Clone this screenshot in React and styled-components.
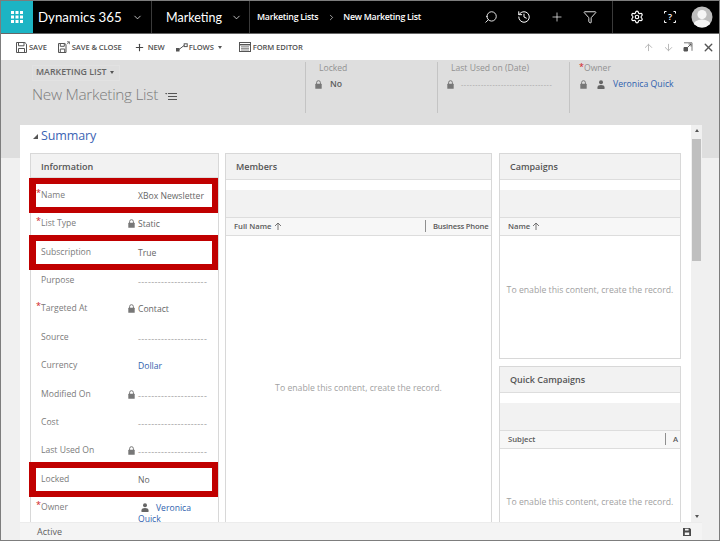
import React from "react";
import styled, { createGlobalStyle } from "styled-components";
import {
  ArrowDown,
  ArrowUp,
  Funnel,
  History,
  Plus,
  Search,
  Settings,
  X,
  ChevronDown,
  ChevronRight,
} from "lucide-react";

const FONT = `"Open Sans", "Noto Sans", "Liberation Sans", sans-serif`;

const GlobalStyle = createGlobalStyle`
  html, body {
    margin: 0;
    padding: 0;
    background: #fff;
  }
  body {
    font-family: ${FONT};
  }
  * {
    box-sizing: border-box;
  }
`;

/**
 * shell
 */
const Frame = styled.div`
  width: 720px;
  height: 541px;
  border: 1px solid #7d7d7d;
  display: flex;
  flex-direction: column;
  overflow: hidden;
  background: #f0f0f0;
`;

const Nav = styled.header`
  height: 33px;
  flex: none;
  display: flex;
  align-items: stretch;
  background: #000;
  color: #fff;
  border-bottom: 1px solid #666;
`;

const AppTile = styled.div`
  width: 32px;
  flex: none;
  display: flex;
  align-items: center;
  justify-content: center;
  background: #1cb4c4;
`;

const NavSegment = styled.div`
  width: ${({ $w }) => $w}px;
  flex: none;
  display: flex;
  align-items: center;
  padding-left: ${({ $pad }) => $pad}px;
  border-right: 1px solid #3a3a3a;
  font-family: Lato, ${FONT};
  font-size: ${({ $size }) => $size}px;
  white-space: nowrap;

  svg {
    margin-left: ${({ $gap }) => $gap}px;
  }
`;

const Crumbs = styled.div`
  flex: none;
  width: 223px;
  padding-left: 7px;
  display: flex;
  align-items: center;
  font-size: 8.8px;
  font-weight: 600;
  letter-spacing: -0.25px;
  white-space: nowrap;

  svg {
    margin: 0 7px 0 9px;
  }
`;

const NavIcons = styled.div`
  width: 140px;
  flex: none;
  display: flex;
  align-items: center;
  padding-left: 11px;
  gap: 19px;
  border-right: 1px solid #3a3a3a;
`;

const NavTools = styled.div`
  flex: 1;
  display: flex;
  align-items: center;
  padding-left: 17px;
`;

const HelpMark = styled.span`
  width: 12px;
  height: 12px;
  margin-left: 20px;
  position: relative;
  font-size: 9px;
  font-weight: 600;
  text-align: center;
  line-height: 12px;

  svg {
    position: absolute;
    inset: 0;
  }
`;

const Avatar = styled.svg`
  width: 22px;
  height: 22px;
  margin-left: 15px;
  flex: none;
`;

/**
 * toolbar
 */
const Toolbar = styled.div`
  height: 26px;
  flex: none;
  display: flex;
  align-items: center;
  padding-left: 15px;
  background: #fff;
`;

const ToolButton = styled.div`
  display: flex;
  align-items: center;
  margin-right: ${({ $mr = 0 }) => $mr}px;
  font-size: 7.6px;
  font-weight: 600;
  color: #505050;
  white-space: nowrap;
  letter-spacing: -0.1px;

  svg {
    flex: none;
    margin-right: ${({ $gap = 2 }) => $gap}px;
  }
`;

const Caret = styled.span`
  width: 0;
  height: 0;
  margin-left: ${({ $ml = 4 }) => $ml}px;
  border-left: 2.5px solid transparent;
  border-right: 2.5px solid transparent;
  border-top: 3px solid ${({ $color = "#555" }) => $color};
`;

const ToolbarRight = styled.div`
  margin-left: auto;
  display: flex;
  align-items: center;
  gap: 9px;
  padding-right: 4px;
  color: #b4b4b4;
`;

/**
 * record header
 */
const Main = styled.main`
  flex: 1;
  min-height: 0;
  display: flex;
  flex-direction: column;
  background: linear-gradient(#dedede 98px, #f0f0f0 98px);
`;

const RecordHeader = styled.section`
  height: 65px;
  flex: none;
  display: flex;
  padding-top: 2px;
`;

const RecordTitle = styled.div`
  width: 304px;
  flex: none;
  padding: 3px 0 0 31px;
`;

const EntityMenu = styled.div`
  width: 88px;
  height: 16px;
  display: flex;
  align-items: center;
  padding: 0 0 2px 3px;
  border: 1px solid #e2e2e2;
  font-size: 8.8px;
  font-weight: 600;
  color: #666;
  white-space: nowrap;
`;

const RecordName = styled.div`
  display: flex;
  align-items: center;
  margin-top: 2px;
  font-size: 15.4px;
  font-weight: 300;
  letter-spacing: -0.3px;
  line-height: 24px;
  color: #7c7c7c;
  white-space: nowrap;

  svg {
    margin: 2px 0 0 7px;
  }
`;

const HeaderField = styled.div`
  width: ${({ $w }) => $w}px;
  height: 51px;
  flex: none;
  border-left: 1px solid #c4c4c4;
  padding: 1px 0 0 ${({ $pad }) => $pad}px;
`;

const HeaderLabel = styled.div`
  position: relative;
  height: 11px;
  margin-left: ${({ $ml = 4 }) => $ml}px;
  font-size: 8.6px;
  line-height: 11px;
  color: #929292;
`;

const HeaderValue = styled.div`
  display: flex;
  align-items: center;
  height: 16px;
  margin-top: 2px;
  font-size: 8.7px;
  color: ${({ $link }) => ($link ? "#2f5fae" : "#5d5d5d")};
  font-weight: ${({ $bold }) => ($bold ? 600 : 400)};
  white-space: nowrap;
`;

const Star = styled.span`
  color: #d02020;
  font-size: 9px;
  line-height: 9px;
`;

const HeaderStar = styled(Star)`
  position: absolute;
  left: -5px;
  top: -1px;
`;

const Dashes = styled.span`
  color: #a0a0a0;
  font-size: ${({ $size = 9 }) => $size}px;
  letter-spacing: ${({ $spacing = 0.4 }) => $spacing}px;
  margin-left: ${({ $ml = 0 }) => $ml}px;
  white-space: nowrap;
`;

const HeaderGap = styled.span`
  margin-left: ${({ $ml }) => $ml}px;
  display: flex;
  align-items: center;
`;

/**
 * form area
 */
const Workspace = styled.div`
  flex: 1;
  min-height: 0;
  display: flex;
  margin: 0 17px 0 19px;
`;

const Card = styled.div`
  flex: 1;
  min-width: 0;
  overflow: hidden;
  background: #fff;
`;

const SectionTitle = styled.div`
  height: 28px;
  display: flex;
  align-items: center;
  padding: 0 0 7px 13px;
  font-size: 12.5px;
  color: #3b64b4;
  letter-spacing: -0.1px;
`;

const Twist = styled.span`
  width: 0;
  height: 0;
  margin: 2px 3px 0 0;
  border-left: 5px solid transparent;
  border-bottom: 5px solid #555;
`;

const Columns = styled.div`
  height: 420px;
  display: flex;
  padding-left: 10px;
`;

const Panel = styled.div`
  flex: ${({ $fill }) => ($fill ? 1 : "none")};
  width: ${({ $w }) => ($w ? `${$w}px` : "auto")};
  height: ${({ $h }) => ($h ? `${$h}px` : "auto")};
  margin-left: ${({ $ml = 0 }) => $ml}px;
  overflow: ${({ $open }) => ($open ? "visible" : "hidden")};
  border: 1px solid #d8d8d8;
  background: #fff;
`;

const SideColumn = styled.div`
  width: 182px;
  margin-left: 7px;
  flex: none;
  display: flex;
  flex-direction: column;
  gap: 7px;
`;

const PanelTitle = styled.div`
  height: ${({ $h = 26 }) => $h}px;
  display: flex;
  align-items: center;
  padding: ${({ $pt = 0 }) => $pt}px 0 0 10px;
  background: #f2f2f2;
  border-bottom: 1px solid #dddddd;
  font-size: 9px;
  font-weight: 600;
  color: #555;
`;

const GridBar = styled.div`
  height: 27px;
  margin-top: 10px;
  background: #f2f2f2;
`;

const GridHead = styled.div`
  height: 19px;
  display: flex;
  align-items: center;
  padding: 0 0 2px 8px;
  background: #f7f7f7;
  border-top: 1px solid #dddddd;
  border-bottom: 1px solid #dddddd;
  font-size: 7.7px;
  font-weight: 600;
  color: #5a5a5a;
  white-space: nowrap;
  overflow: hidden;

  svg {
    margin-left: 2px;
  }
`;

const GridColumn = styled.div`
  flex: none;
  width: ${({ $w }) => ($w ? `${$w}px` : "auto")};
  display: flex;
  align-items: center;
  letter-spacing: ${({ $tight }) => ($tight ? "-0.2px" : "0")};
`;

const ColumnRule = styled.span`
  width: 1px;
  height: 12px;
  flex: none;
  margin-right: 7px;
  background: #8f8f8f;
`;

const EmptyNote = styled.div`
  padding-top: ${({ $top }) => $top}px;
  text-align: center;
  font-size: 8.7px;
  line-height: 12px;
  color: #a2a2a2;
  white-space: nowrap;
`;

const Rows = styled.div`
  padding-top: 3px;
`;

const Row = styled.div`
  position: relative;
  height: 28.36px;
  display: grid;
  grid-template-columns: 5px 87px 10px 1fr;
  padding-left: 5px;
  align-items: start;

  ${({ $marked }) =>
    $marked &&
    `
    &::after {
      content: "";
      position: absolute;
      inset: -3px 0 -4px -2px;
      border: solid #c00000;
      border-width: 6px 6px 6px 7px;
      pointer-events: none;
    }
  `}
`;

const RowStar = styled(Star)`
  padding-top: 7px;
`;

const RowLabel = styled.div`
  font-size: 8.6px;
  line-height: 28px;
  color: #7b7b7b;
  white-space: nowrap;
`;

const RowLock = styled.div`
  padding-top: 10px;
`;

const RowValue = styled.div`
  padding: 10px 10px 0 0;
  font-size: 8.6px;
  line-height: 11.5px;
  color: ${({ $link }) => ($link ? "#2f5fae" : "#666")};

  svg {
    vertical-align: -1px;
    margin: 0 7px 0 3px;
  }
`;

const Scrollbar = styled.div`
  width: 11px;
  flex: none;
  display: flex;
  flex-direction: column;
  align-items: center;
  padding-top: 4px;
  background: #f0f0f0;
`;

const ScrollThumb = styled.div`
  width: 9px;
  height: 122px;
  margin-top: 7px;
  background: #bfbfbf;
`;

const ScrollUp = styled.span`
  width: 0;
  height: 0;
  border-left: 2.5px solid transparent;
  border-right: 2.5px solid transparent;
  border-bottom: 3px solid #555;
`;

const ScrollDown = styled(Caret)`
  margin: auto 0 4px;
`;

const Footer = styled.footer`
  height: 18px;
  flex: none;
  margin: 0 17px 0 19px;
  display: flex;
  align-items: center;
  justify-content: space-between;
  padding: 0 11px 0 17px;
  background: #f4f4f4;
  border-top: 1px solid #ececec;
  font-size: 9px;
  color: #5f5f5f;
`;

/**
 * drawn icons
 */
const Waffle = () => (
  <svg width="12" height="12" viewBox="0 0 12 12" fill="#fff">
    {[0, 4.5, 9].flatMap((y) =>
      [0, 4.5, 9].map((x) => (
        <rect key={`${x}-${y}`} x={x} y={y} width="3" height="3" />
      ))
    )}
  </svg>
);

const Lock = ({ color = "#777" }) => (
  <svg width="7" height="9" viewBox="0 0 7 9" style={{ display: "block" }}>
    <path
      d="M1.6 4V2.6a1.9 1.9 0 0 1 3.8 0V4"
      fill="none"
      stroke={color}
      strokeWidth="1"
    />
    <rect x="0.3" y="3.8" width="6.4" height="5" rx="0.4" fill={color} />
  </svg>
);

const Person = ({ color = "#666" }) => (
  <svg width="8" height="9" viewBox="0 0 8 9" fill={color}>
    <circle cx="4" cy="2.2" r="2" />
    <path d="M0.5 9V7.2C0.5 5.8 1.8 5 4 5s3.5.8 3.5 2.2V9z" />
  </svg>
);

const SaveIcon = ({ size = 11, color = "#555" }) => (
  <svg width={size} height={size} viewBox="0 0 11 11" fill="none">
    <path d="M.5.5h8.4l1.6 1.6v8.4H.5z" stroke={color} />
    <path d="M2.5 1v2.8h5.5V1M2.5 10V6.5h6V10" stroke={color} />
  </svg>
);

const FooterSave = () => (
  <svg width="8" height="8" viewBox="0 0 8 8" fill="#4a4a4a">
    <path d="M0 0h6.8L8 1.2V8H0zM2 .8v1.8h3.6V.8zM1.8 4.6V7h4.4V4.6z" fillRule="evenodd" />
  </svg>
);

const SaveCloseIcon = () => (
  <svg width="12" height="12" viewBox="0 0 12 12" fill="none" stroke="#555">
    <path d="M.5 2.5h6.4l1.1 1.1v7.9H.5z" />
    <path d="M2.3 3v2.3h4V3M2.3 11V8h4.4v3" />
    <path d="M9 .8h2.4v2.4M11.4.8 9 3.2" strokeWidth=".8" />
  </svg>
);

const FlowsIcon = () => (
  <svg width="12" height="9" viewBox="0 0 12 9" fill="none" stroke="#555">
    <rect x=".5" y="5.5" width="2.5" height="2.5" fill="#555" />
    <path d="M3 6.5 8 2.5" />
    <rect x="8.2" y=".8" width="3" height="2.8" />
  </svg>
);

const FormIcon = () => (
  <svg width="12" height="10" viewBox="0 0 12 10" fill="none" stroke="#555">
    <rect x=".5" y=".5" width="11" height="9" />
    <path d="M.5 2.7h11" strokeWidth="1.4" />
    <path d="M2 4.8h8M2 6.4h8M2 8h8" strokeWidth=".7" />
  </svg>
);

const PopoutIcon = () => (
  <svg width="10" height="10" viewBox="0 0 10 10" fill="none" stroke="#555">
    <path d="M1 .8h8v8" strokeWidth=".8" />
    <path d="M1 5.5h3.5V9H1z" fill="#555" />
    <path d="M4.5 5.5 8 2M5.5 2H8v2.5" strokeWidth=".9" />
  </svg>
);

const ListGlyph = () => (
  <svg width="12" height="7" viewBox="0 0 12 7" fill="#555">
    <path d="M0 0h2.4L1.2 1.4zM3 0h9v1H3zM3 3h9v1H3zM3 6h9v1H3z" />
  </svg>
);

const ArrowUpMini = () => (
  <svg width="8" height="8" viewBox="0 0 8 8" fill="none" stroke="#666">
    <path d="M4 8V1M1 4l3-3 3 3" strokeWidth=".9" />
  </svg>
);

const HelpCorners = () => (
  <svg width="12" height="12" viewBox="0 0 12 12" fill="none" stroke="#fff">
    <path d="M2.5.5h-2v2M9.5.5h2v2M.5 9.5v2h2M11.5 9.5v2h-2" />
  </svg>
);

const ANON = (
  <Avatar viewBox="0 0 22 22">
    <defs>
      <clipPath id="face">
        <circle cx="11" cy="11" r="10.5" />
      </clipPath>
    </defs>
    <circle cx="11" cy="11" r="10.5" fill="#bdbdbd" />
    <g clipPath="url(#face)" fill="#f5f5f5">
      <circle cx="11" cy="8.6" r="4.6" />
      <ellipse cx="11" cy="19.5" rx="9" ry="6" />
    </g>
  </Avatar>
);

const DASHES = "---------------------";

const fields = [
  { label: "Name", required: true, value: "XBox Newsletter", marked: true },
  { label: "List Type", required: true, value: "Static", locked: true },
  { label: "Subscription", value: "True", marked: true },
  { label: "Purpose", value: DASHES },
  { label: "Targeted At", required: true, value: "Contact", locked: true },
  { label: "Source", value: DASHES },
  { label: "Currency", value: "Dollar", link: true },
  { label: "Modified On", value: DASHES, locked: true },
  { label: "Cost", value: DASHES },
  { label: "Last Used On", value: DASHES, locked: true },
  { label: "Locked", value: "No", marked: true },
  { label: "Owner", required: true, value: "Veronica Quick", link: true, person: true },
];

const GridPanelBody = ({ columns, noteTop }) => (
  <>
    <GridBar />
    <GridHead>{columns}</GridHead>
    <EmptyNote $top={noteTop}>To enable this content, create the record.</EmptyNote>
  </>
);

const App = () => (
  <>
    <GlobalStyle />
    <Frame>
      <Nav>
        <AppTile>
          <Waffle />
        </AppTile>
        <NavSegment $w={119} $pad={5} $gap={10} $size={13.3}>
          Dynamics 365
          <ChevronDown size={11} strokeWidth={1.6} />
        </NavSegment>
        <NavSegment $w={98} $pad={14} $gap={9} $size={12.5}>
          Marketing
          <ChevronDown size={11} strokeWidth={1.6} />
        </NavSegment>
        <Crumbs>
          Marketing Lists
          <ChevronRight size={9} strokeWidth={1.6} />
          New Marketing List
        </Crumbs>
        <NavIcons>
          <Search size={14} strokeWidth={1.5} style={{ transform: "scaleX(-1)" }} />
          <History size={14} strokeWidth={1.7} />
          <Plus size={14} strokeWidth={1.2} />
          <Funnel size={14} strokeWidth={1.5} />
        </NavIcons>
        <NavTools>
          <Settings size={14} strokeWidth={2} />
          <HelpMark>
            <HelpCorners />?
          </HelpMark>
          {ANON}
        </NavTools>
      </Nav>

      <Toolbar>
        <ToolButton $mr={11}>
          <SaveIcon />
          SAVE
        </ToolButton>
        <ToolButton $mr={12}>
          <SaveCloseIcon />
          SAVE &amp; CLOSE
        </ToolButton>
        <ToolButton $mr={11} $gap={3}>
          <Plus size={11} strokeWidth={2.4} color="#444" />
          NEW
        </ToolButton>
        <ToolButton $mr={17} $gap={1}>
          <FlowsIcon />
          FLOWS
          <Caret />
        </ToolButton>
        <ToolButton>
          <FormIcon />
          FORM EDITOR
        </ToolButton>
        <ToolbarRight>
          <ArrowUp size={11} strokeWidth={2} />
          <ArrowDown size={11} strokeWidth={2} />
          <PopoutIcon />
          <X size={13} strokeWidth={2.6} color="#555" />
        </ToolbarRight>
      </Toolbar>

      <Main>
        <RecordHeader>
          <RecordTitle>
            <EntityMenu>
              MARKETING LIST
              <Caret $ml={3} />
            </EntityMenu>
            <RecordName>
              New Marketing List
              <ListGlyph />
            </RecordName>
          </RecordTitle>
          <HeaderField $w={132} $pad={9}>
            <HeaderLabel>Locked</HeaderLabel>
            <HeaderValue $bold>
              <Lock />
              <HeaderGap $ml={8}>No</HeaderGap>
            </HeaderValue>
          </HeaderField>
          <HeaderField $w={132} $pad={9}>
            <HeaderLabel>Last Used on (Date)</HeaderLabel>
            <HeaderValue>
              <Lock />
              <Dashes $size={7} $spacing={0.6} $ml={7}>
                {"-".repeat(32)}
              </Dashes>
            </HeaderValue>
          </HeaderField>
          <HeaderField $w={133} $pad={10}>
            <HeaderLabel>
              <HeaderStar>*</HeaderStar>
              Owner
            </HeaderLabel>
            <HeaderValue $link>
              <Lock />
              <HeaderGap $ml={10}>
                <Person />
              </HeaderGap>
              <HeaderGap $ml={8}>Veronica Quick</HeaderGap>
            </HeaderValue>
          </HeaderField>
        </RecordHeader>

        <Workspace>
          <Card>
            <SectionTitle>
              <Twist />
              Summary
            </SectionTitle>
            <Columns>
              <Panel $w={189} $open>
                <PanelTitle $h={24} $pt={2}>
                  Information
                </PanelTitle>
                <Rows>
                  {fields.map((field) => (
                    <Row key={field.label} $marked={field.marked}>
                      <RowStar>{field.required ? "*" : ""}</RowStar>
                      <RowLabel>{field.label}</RowLabel>
                      <RowLock>{field.locked && <Lock />}</RowLock>
                      <RowValue $link={field.link}>
                        {field.person && <Person />}
                        {field.value === DASHES ? (
                          <Dashes>{field.value}</Dashes>
                        ) : (
                          field.value
                        )}
                      </RowValue>
                    </Row>
                  ))}
                </Rows>
              </Panel>

              <Panel $w={267} $ml={6}>
                <PanelTitle>Members</PanelTitle>
                <GridPanelBody
                  noteTop={146}
                  columns={
                    <>
                      <GridColumn $w={191}>
                        Full Name
                        <ArrowUpMini />
                      </GridColumn>
                      <ColumnRule />
                      <GridColumn $tight>Business Phone</GridColumn>
                    </>
                  }
                />
              </Panel>

              <SideColumn>
                <Panel $h={206}>
                  <PanelTitle>Campaigns</PanelTitle>
                  <GridPanelBody
                    noteTop={48}
                    columns={
                      <GridColumn>
                        Name
                        <ArrowUpMini />
                      </GridColumn>
                    }
                  />
                </Panel>
                <Panel $fill>
                  <PanelTitle>Quick Campaigns</PanelTitle>
                  <GridPanelBody
                    noteTop={47}
                    columns={
                      <>
                        <GridColumn $w={157}>Subject</GridColumn>
                        <ColumnRule />
                        <GridColumn>A</GridColumn>
                      </>
                    }
                  />
                </Panel>
              </SideColumn>
            </Columns>
          </Card>
          <Scrollbar>
            <ScrollUp />
            <ScrollThumb />
            <ScrollDown $ml={0} />
          </Scrollbar>
        </Workspace>

        <Footer>
          Active
          <FooterSave />
        </Footer>
      </Main>
    </Frame>
  </>
);

export default App;
